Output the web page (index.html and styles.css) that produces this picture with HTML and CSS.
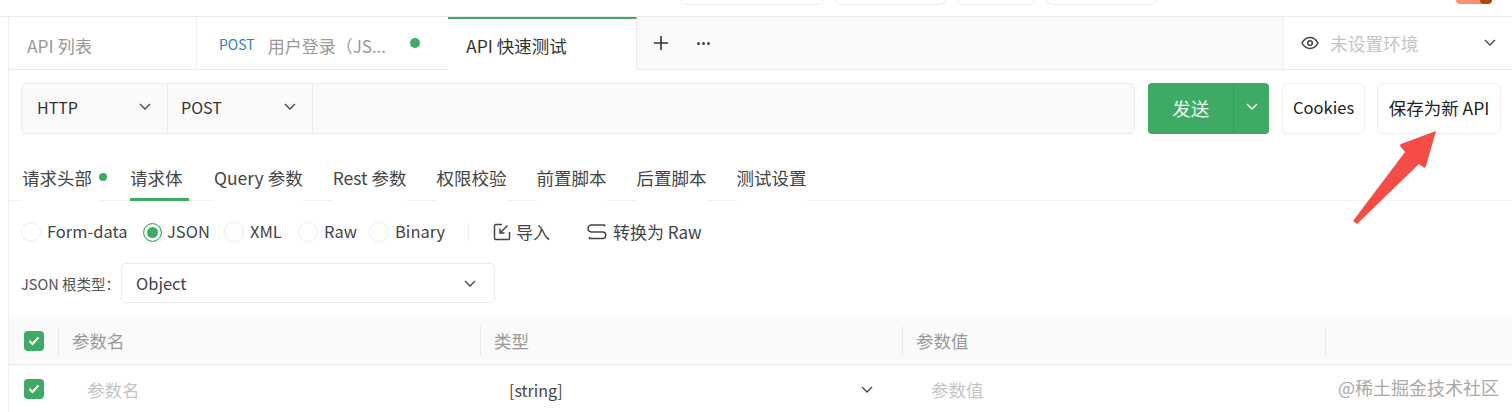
FILE: index.html
```html
<!DOCTYPE html>
<html lang="zh">
<head>
<meta charset="utf-8">
<title>API 快速测试</title>
<link rel="stylesheet" href="styles.css">
</head>
<body>
<header class="topbar">
  <span class="topbtn w142"></span><span class="topbtn w110"></span><span class="topbtn w78"></span><span class="topbtn w110"></span>
  <span class="avatar"><span class="avatar-dark"></span></span>
</header>
<main class="main">
  <nav class="tabs">
    <div class="tab tab-list">API 列表</div>
    <div class="tab tab-post"><span class="method">POST</span><span class="tab-name">用户登录（JS...</span><span class="dot tab-dot"></span></div>
    <div class="tab tab-active">API 快速测试</div>
    <div class="tab-tools">
      <svg class="plus" viewBox="0 0 14 14"><path d="M7 0v14M0 7h14"/></svg>
      <span class="more"><i></i><i></i><i></i></span>
    </div>
    <div class="env">
      <svg class="eye" viewBox="0 0 18 14"><path d="M1 7c2-3.600 4.800-5.500 8-5.500s6 1.900 8 5.500c-2 3.600-4.800 5.500-8 5.500S3 10.600 1 7z"/><circle cx="9" cy="7" r="2.300"/></svg>
      <span class="env-name">未设置环境</span>
      <svg class="chev env-chev" viewBox="0 0 12 7"><path d="M1 1l5 5 5-5"/></svg>
    </div>
  </nav>

  <section class="request">
    <div class="url-group">
      <div class="sel sel-http"><span>HTTP</span><svg class="chev" viewBox="0 0 12 7"><path d="M1 1l5 5 5-5"/></svg></div>
      <div class="sel sel-post"><span>POST</span><svg class="chev" viewBox="0 0 12 7"><path d="M1 1l5 5 5-5"/></svg></div>
    </div>
    <div class="send"><span class="send-main">发送</span><span class="send-more"><svg class="chev chev-white" viewBox="0 0 12 7"><path d="M1 1l5 5 5-5"/></svg></span></div>
    <button class="btn btn-cookies">Cookies</button>
    <button class="btn btn-save">保存为新 API</button>
  </section>

  <nav class="subtabs">
    <span class="subtab first">请求头部<span class="dot sub-dot"></span></span>
    <span class="subtab current">请求体</span>
    <span class="subtab">Query 参数</span>
    <span class="subtab">Rest 参数</span>
    <span class="subtab">权限校验</span>
    <span class="subtab">前置脚本</span>
    <span class="subtab">后置脚本</span>
    <span class="subtab">测试设置</span>
  </nav>

  <div class="body-types">
    <label class="radio r-form"><i class="circle"></i>Form-data</label>
    <label class="radio r-json"><i class="circle on"></i>JSON</label>
    <label class="radio r-xml"><i class="circle"></i>XML</label>
    <label class="radio r-raw"><i class="circle"></i>Raw</label>
    <label class="radio r-bin"><i class="circle"></i>Binary</label>
    <span class="divider"></span>
    <span class="action act-import"><svg class="act-icon" viewBox="0 0 18 18"><path d="M9 1.500H2.500a1 1 0 0 0-1 1v13a1 1 0 0 0 1 1h13a1 1 0 0 0 1-1V9"/><path d="M14.500 2.500L7 10M7 5.500V10h4.500"/></svg>导入</span>
    <span class="action act-conv"><svg class="act-icon conv" viewBox="0 0 20 18"><path d="M17.500 3.500V2H4.500a3.500 3.500 0 0 0 0 7h11a3.250 3.250 0 0 1 0 6.500H2.500V14"/></svg>转换为 Raw</span>
  </div>

  <div class="root-type">
    <span class="root-label">JSON 根类型：</span>
    <div class="root-select"><span>Object</span><svg class="chev" viewBox="0 0 12 7"><path d="M1 1l5 5 5-5"/></svg></div>
  </div>

  <div class="table">
    <div class="thead">
      <span class="cell-check"><i class="check"><svg viewBox="0 0 12 10"><path d="M1.500 5l3 3 6-6.500"/></svg></i></span>
      <span class="th th-name">参数名</span>
      <span class="th th-type">类型</span>
      <span class="th th-value">参数值</span>
      <span class="th th-last"></span>
    </div>
    <div class="trow">
      <span class="cell-check"><i class="check"><svg viewBox="0 0 12 10"><path d="M1.500 5l3 3 6-6.500"/></svg></i></span>
      <span class="td td-name">参数名</span>
      <span class="td td-type"><span>[string]</span><svg class="chev" viewBox="0 0 12 7"><path d="M1 1l5 5 5-5"/></svg></span>
      <span class="td td-value">参数值</span>
    </div>
  </div>
</main>
<svg class="arrow" viewBox="0 0 85 95"><path d="M84 1L49 14Q47 15.500 49 17L53 22 1 91 5 94 67 34 71 37Q73 39 74 36z"/></svg>
<span class="watermark">@稀土掘金技术社区</span>
</body>
</html>
```
FILE: styles.css
```css
* { box-sizing: border-box; }
html, body { margin: 0; padding: 0; }
body {
  width: 1512px;
  height: 412px;
  overflow: hidden;
  position: relative;
  background: #fff;
  color: #333;
  font-family: "Noto Sans CJK SC", "Noto Sans", sans-serif;
  font-size: 17px;
  font-weight: 400;
}
i { font-style: normal; display: block; }
svg { display: block; }

.topbar {
  height: 17px;
  border-bottom: 1px solid #ececec;
  display: flex;
  padding-left: 681px;
  gap: 12px;
}
.topbtn {
  display: block;
  height: 5px;
  border: 1px solid #eee;
  border-top: 0;
  border-radius: 0 0 5px 5px;
}
.w142 { width: 142px; }
.w110 { width: 110px; }
.w78 { width: 78px; }
.avatar {
  display: flex;
  justify-content: flex-end;
  width: 36px;
  height: 4px;
  margin-left: 287px;
  background: #fb8f72;
  border-radius: 0 0 5px 5px;
  overflow: hidden;
}
.avatar-dark { width: 12px; background: #b8430f; border-radius: 0 0 6px 6px; }

.main {
  margin-left: 8px;
  height: 395px;
  border-left: 1px solid #efefef;
}

.tabs {
  display: flex;
  height: 53px;
  background: #fafafa;
  border-bottom: 1px solid #ececec;
}
.tab {
  display: flex;
  align-items: center;
  height: 53px;
  background: #fff;
  padding-top: 4px;
  font-size: 17.300px;
  color: #999;
  white-space: nowrap;
}
.tab-list { width: 188px; padding-left: 18px; border-right: 1px solid #f0f0f0; border-bottom: 1px solid #ececec; }
.tab-post { width: 251px; padding-left: 22px; font-size: 17px; border-bottom: 1px solid #ececec; }
.method { color: #2f7fc6; font-size: 14px; margin-top: -3px; margin-right: 13px; }
.tab-name { width: 125px; overflow: hidden; }
.dot { display: inline-block; border-radius: 50%; background: #3fa966; }
.tab-dot { width: 10px; height: 10px; margin-left: 17px; margin-top: -5px; }
.tab-active {
  width: 189px;
  padding-top: 2px;
  padding-left: 18px;
  font-size: 17.500px;
  color: #333;
  border-top: 2px solid #3fa966;
  border-right: 1px solid #ececec;
}
.tab-tools {
  flex: 1;
  display: flex;
  align-items: center;
  padding-left: 17px;
  gap: 29px;
}
.plus { width: 14px; height: 14px; fill: none; stroke: #333; stroke-width: 1.600; }
.more { display: flex; gap: 2px; }
.more i { width: 3px; height: 3px; border-radius: 50%; background: #444; }
.env {
  width: 229px;
  display: flex;
  align-items: center;
  padding: 0 0 1px 17px;
  background: #fff;
  border-left: 1px solid #f0f0f0;
}
.eye { width: 18px; height: 14px; fill: none; stroke: #444; stroke-width: 1.500; }
.env-name { margin-left: 11px; font-size: 17.700px; color: #c4c4c4; }
.env-chev { margin-left: 66px; }

.chev { width: 12px; height: 7px; fill: none; stroke: #444; stroke-width: 1.300; flex: none; }
.chev-white { stroke: #fff; }

.request {
  display: flex;
  align-items: stretch;
  height: 51px;
  margin: 13px 11px 0 12px;
}
.url-group {
  width: 1115px;
  display: flex;
  background: #fafafa;
  border: 1px solid #ececec;
  border-radius: 5px;
}
.sel {
  display: flex;
  align-items: center;
  justify-content: space-between;
  border-right: 1px solid #ececec;
  padding-bottom: 4px;
  font-size: 16px;
  color: #333;
}
.sel-http { width: 146px; padding-left: 15px; padding-right: 16px; }
.sel-post { width: 145px; padding-left: 13px; padding-right: 16px; }
.send {
  width: 121px;
  margin-left: 13px;
  display: flex;
  background: #3fa966;
  border-radius: 4px;
  color: #eafff1;
}
.send-main {
  width: 86px;
  display: flex;
  align-items: center;
  justify-content: center;
  padding-bottom: 2px;
  font-size: 18.500px;
  border-right: 1px solid #389a5c;
}
.send-more { flex: 1; display: flex; align-items: center; justify-content: center; padding-bottom: 4px; }
.btn {
  font: inherit;
  font-size: 16.500px;
  color: #222;
  background: #fff;
  border: 1px solid #efefef;
  border-radius: 5px;
  padding: 0 0 3px;
  white-space: nowrap;
}
.btn-cookies { width: 83px; margin-left: 13px; }
.btn-save { width: 124px; margin-left: 12px; font-size: 17.500px; }

.subtabs {
  display: flex;
  height: 67px;
  padding: 25px 0 0 13px;
  gap: 30px;
  border-bottom: 1px solid #f0f0f0;
}
.subtab {
  display: block;
  height: 42px;
  padding-top: 7px;
  background: #fff;
  font-size: 17.500px;
  color: #444;
  white-space: nowrap;
  line-height: 24px;
}
.subtab.first { width: 78px; }
.sub-dot { width: 8px; height: 8px; margin-left: 7px; vertical-align: 4px; }
.subtab.current { width: 59px; margin-right: -5px; border-bottom: 3px solid #3fa966; }

.body-types {
  display: flex;
  align-items: center;
  height: 62px;
  padding: 0 0 2px 12px;
  font-size: 16.500px;
  color: #444;
}
.radio { display: flex; align-items: center; gap: 6px; white-space: nowrap; }
.circle {
  width: 20px;
  height: 20px;
  margin-top: 2px;
  border: 1px solid #ececec;
  border-radius: 50%;
  background: #fff;
}
.circle.on {
  width: 19px;
  height: 19px;
  margin-right: -1px;
  border: 1.500px solid #3fa966;
  box-shadow: inset 0 0 0 3px #fff;
  background: #3fa966;
}
.r-form { width: 122px; }
.r-json { width: 81px; }
.r-xml { width: 74px; }
.r-raw { width: 71px; }
.r-bin { width: 99px; }
.divider { width: 1px; height: 18px; margin-top: 2px; background: #eee; }
.action { display: flex; align-items: center; white-space: nowrap; font-size: 17px; }
.act-import { margin-left: 24px; gap: 5px; width: 94px; }
.act-conv { gap: 6px; }
.act-icon { width: 18px; height: 18px; margin-top: 2px; fill: none; stroke: #444; stroke-width: 1.500; }
.act-icon.conv { width: 20px; }

.root-type { display: flex; align-items: center; height: 40px; padding-left: 12px; }
.root-label { width: 100px; font-size: 14.500px; color: #555; white-space: nowrap; }
.root-select {
  width: 374px;
  height: 40px;
  display: flex;
  align-items: center;
  justify-content: space-between;
  padding: 0 18px 0 14px;
  border: 1px solid #ececec;
  border-radius: 5px;
  font-size: 16.500px;
  color: #444;
}

.table { margin-top: 14px; }
.thead, .trow {
  display: grid;
  grid-template-columns: 49px 422px 422px 423px 1fr;
  align-items: center;
}
.thead {
  height: 48px;
  background: #fafafa;
  border-bottom: 1px solid #e8e8e8;
}
.trow { height: 47px; grid-template-columns: 49px 422px 422px 1fr; }
.cell-check { display: block; padding-left: 15px; }
.check {
  width: 20px;
  height: 20px;
  display: flex;
  align-items: center;
  justify-content: center;
  background: #3fa966;
  border-radius: 4px;
}
.check svg { width: 12px; height: 10px; fill: none; stroke: #fff; stroke-width: 2; }
.th {
  display: block;
  height: 30px;
  line-height: 30px;
  padding-left: 13px;
  border-left: 1px solid #e8e8e8;
  font-size: 17.500px;
  color: #999;
}
.td { display: block; padding-top: 2px; font-size: 17.500px; color: #c4c4c4; }
.td-name { padding-left: 29px; }
.td-type {
  display: flex;
  align-items: center;
  justify-content: space-between;
  padding: 2px 29px 0 29px;
  font-size: 16px;
  color: #444;
}
.td-value { padding-left: 29px; }

.arrow {
  position: absolute;
  left: 1352px;
  top: 130px;
  width: 85px;
  height: 95px;
  fill: #f44c46;
}
.watermark {
  position: absolute;
  left: 1338px;
  top: 375px;
  font-size: 18px;
  color: #a8a8a8;
  white-space: nowrap;
  line-height: 24px;
}
```
